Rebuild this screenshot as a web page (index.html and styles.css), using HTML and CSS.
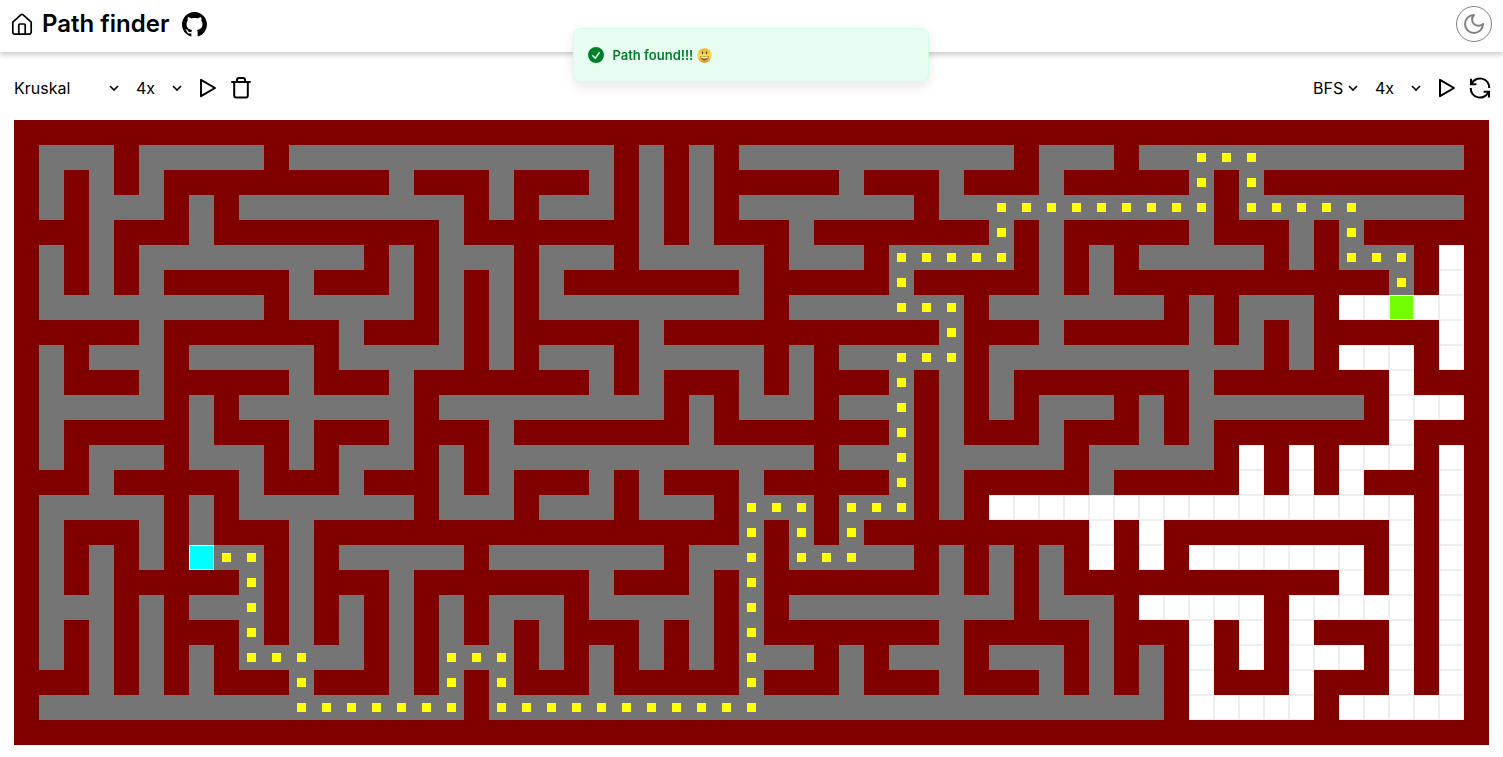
FILE: index.html
```html
<!DOCTYPE html>
<html lang="en">
<head>
<meta charset="utf-8">
<meta name="viewport" content="width=device-width, initial-scale=1">
<title>Path finder</title>
<link rel="stylesheet" href="styles.css">
</head>
<body>
<header class="header">
  <div class="brand">
    <a class="icon-link" href="#" aria-label="Home">
      <svg class="icon home" viewBox="0 0 24 24"><path d="M2.8 10.1 10.8 2.800a1.8 1.8 0 0 1 2.4 0l8 7.300V20a2.2 2.2 0 0 1-2.2 2.200H5A2.2 2.2 0 0 1 2.800 20zM8.800 22.200V13a1 1 0 0 1 1-1h4.400a1 1 0 0 1 1 1v9.200"/></svg>
    </a>
    <h1 class="title">Path finder</h1>
    <a class="icon-link github" href="#" aria-label="GitHub">
      <svg class="icon-github" viewBox="0 0 16 16"><path d="M8 0C3.58 0 0 3.58 0 8c0 3.54 2.29 6.53 5.47 7.59.4.07.55-.17.55-.38 0-.19-.01-.82-.01-1.49-2.01.37-2.53-.49-2.69-.94-.09-.23-.48-.94-.82-1.13-.28-.15-.68-.52-.01-.53.63-.01 1.08.58 1.23.82.72 1.21 1.87.87 2.33.66.07-.52.28-.87.51-1.07-1.78-.2-3.64-.89-3.64-3.95 0-.87.31-1.59.82-2.15-.08-.2-.36-1.02.08-2.12 0 0 .67-.21 2.2.82.64-.18 1.32-.27 2-.27s1.36.09 2 .27c1.53-1.04 2.2-.82 2.2-.82.44 1.1.16 1.92.08 2.12.51.56.82 1.27.82 2.15 0 3.07-1.87 3.75-3.65 3.95.29.25.54.73.54 1.48 0 1.07-.01 1.93-.01 2.2 0 .21.15.46.55.38A8.01 8.01 0 0 0 16 8c0-4.42-3.58-8-8-8z"/></svg>
    </a>
  </div>
  <button class="theme" type="button" aria-label="Toggle theme">
    <svg class="icon" viewBox="0 0 24 24"><path d="M12 3a6 6 0 0 0 9 9 9 9 0 1 1-9-9Z"/></svg>
  </button>
</header>

<main>
  <div class="toolbar">
    <div class="group">
      <div class="picker picker-wide">
        <select aria-label="Maze algorithm"><option>Kruskal</option></select>
        <svg class="chevron" viewBox="0 0 12 12"><path d="M2 4l4 4 4-4"/></svg>
      </div>
      <div class="picker">
        <select aria-label="Maze speed"><option>4x</option></select>
        <svg class="chevron" viewBox="0 0 12 12"><path d="M2 4l4 4 4-4"/></svg>
      </div>
      <div class="actions">
        <button class="icon-button" type="button" aria-label="Generate maze">
          <svg class="icon" viewBox="0 0 24 24"><path d="M6 3.8v16.4L20 12z"/></svg>
        </button>
        <button class="icon-button" type="button" aria-label="Clear">
          <svg class="icon" viewBox="0 0 24 24"><path d="M3 6h18M5.2 6v13.6a2 2 0 0 0 2 2h9.6a2 2 0 0 0 2-2V6M8 6V4a2 2 0 0 1 2-2h4a2 2 0 0 1 2 2v2"/></svg>
        </button>
      </div>
    </div>
    <div class="group">
      <div class="picker picker-narrow">
        <select aria-label="Search algorithm"><option>BFS</option></select>
        <svg class="chevron" viewBox="0 0 12 12"><path d="M2 4l4 4 4-4"/></svg>
      </div>
      <div class="picker">
        <select aria-label="Search speed"><option>4x</option></select>
        <svg class="chevron" viewBox="0 0 12 12"><path d="M2 4l4 4 4-4"/></svg>
      </div>
      <div class="actions">
        <button class="icon-button" type="button" aria-label="Find path">
          <svg class="icon" viewBox="0 0 24 24"><path d="M6 3.8v16.4L20 12z"/></svg>
        </button>
        <button class="icon-button" type="button" aria-label="Reset search">
          <svg class="icon sharp" viewBox="0 0 24 24"><path d="M3 2.8v5.4h5.4M3.4 8.2A9.3 9.3 0 0 1 21.3 12M21 21.4v-5.6h-5.4M20.6 15.8A9.3 9.3 0 0 1 2.7 12"/></svg>
        </button>
      </div>
    </div>
  </div>
  <div class="board" id="board" role="img" aria-label="Maze"></div>
</main>

<div class="toast" role="status">
  <svg class="toast-icon" viewBox="0 0 20 20"><path fill-rule="evenodd" d="M10 18a8 8 0 100-16 8 8 0 000 16zm3.857-9.809a.75.75 0 00-1.214-.882l-3.483 4.79-1.88-1.88a.75.75 0 10-1.06 1.061l2.5 2.5a.75.75 0 001.137-.089l4-5.5z"/></svg>
  <span>Path found!!!</span>
  <svg class="emoji" viewBox="0 0 30 30" role="img" aria-label="Smiling face">
    <defs><linearGradient id="face" x1="0" y1="0" x2="0" y2="1"><stop offset="0" stop-color="#eeb02f"/><stop offset=".55" stop-color="#fde35a"/><stop offset="1" stop-color="#dd8424"/></linearGradient></defs>
    <circle cx="15" cy="15" r="14.5" fill="url(#face)"/>
    <ellipse cx="11" cy="9.500" rx="1.5" ry="3.200" fill="#6b4516"/>
    <ellipse cx="19" cy="9.500" rx="1.5" ry="3.200" fill="#6b4516"/>
    <path d="M6.500 16c5 1.600 12 1.600 17 0 0 5-3.500 8.500-8.500 8.500s-8.500-3.500-8.500-8.500z" fill="#8a5a1c"/>
    <path d="M8 17c4.500 1.200 9.500 1.200 14 0l-.8 3c-4 1-8.400 1-12.400 0z" fill="#fff"/>
  </svg>
</div>
<script src="board.js"></script>
</body>
</html>
```
FILE: styles.css
```css
* {
  box-sizing: border-box;
}

body {
  margin: 0;
  background: #fff;
  color: #000;
  font-family: Inter, "Liberation Sans", sans-serif;
  font-size: 16px;
}

button,
select {
  margin: 0;
  padding: 0;
  border: 0;
  background: none;
  color: inherit;
  font: inherit;
}

.header {
  display: flex;
  align-items: center;
  justify-content: space-between;
  padding: 6px 11px 10px 10px;
  box-shadow: 0 3px 5px rgba(0, 0, 0, 0.2);
}

.brand {
  display: flex;
  align-items: center;
  gap: 8px;
}

.title {
  margin: 0;
  font-size: 24px;
  font-weight: 600;
  line-height: 32px;
}

.icon-link {
  display: flex;
  color: inherit;
}

.github {
  margin-left: 5px;
}

.icon {
  display: block;
  width: 24px;
  height: 24px;
  fill: none;
  stroke: currentColor;
  stroke-width: 2;
  stroke-linecap: round;
  stroke-linejoin: round;
}

.home {
  stroke-width: 1.7;
}

.sharp {
  stroke-linecap: butt;
  stroke-linejoin: miter;
}

.icon-github {
  width: 25px;
  height: 25px;
  fill: currentColor;
}

.theme {
  display: grid;
  place-items: center;
  width: 36px;
  height: 36px;
  border: 1px solid #808080;
  border-radius: 50%;
  color: #808080;
}

.toolbar {
  display: flex;
  justify-content: space-between;
  padding: 24px 11px 20px 14px;
}

.group {
  display: flex;
  align-items: center;
  gap: 16px;
}

.picker {
  position: relative;
  width: 47px;
}

.picker-wide {
  width: 106px;
}

.picker-narrow {
  width: 46px;
}

.picker select {
  display: block;
  width: 100%;
  height: 24px;
  appearance: none;
}

.chevron {
  position: absolute;
  top: 6px;
  right: 0;
  width: 12px;
  height: 12px;
  fill: none;
  stroke: currentColor;
  stroke-width: 1.6;
  pointer-events: none;
}

.actions {
  display: flex;
  gap: 10px;
  margin-left: -4px;
}

.board {
  display: grid;
  grid-template-columns: repeat(59, 25px);
  grid-auto-rows: 25px;
  justify-content: center;
}

.wall {
  background: #800000;
}

.visited {
  background: #757575;
}

.path {
  display: grid;
  place-items: center;
  background: #757575;
}

.path::before {
  content: "";
  width: 9px;
  height: 9px;
  background: #ff0;
}

.open {
  border: 1px solid #eee;
  background: #fff;
}

.start {
  border: 1px solid #eee;
  background: #0ff;
}

.end {
  border: 1px solid #eee;
  background: #73ff00;
}

.toast {
  position: fixed;
  top: 28px;
  left: 50%;
  display: flex;
  align-items: center;
  width: 356px;
  margin-left: -179px;
  padding: 16px 12px;
  border: 1px solid #d3fde5;
  border-radius: 8px;
  background: #e8fdf1;
  box-shadow: 0 4px 12px rgba(0, 0, 0, 0.1);
  color: #00802b;
  font-size: 13px;
  font-weight: 600;
  line-height: 20px;
}

.toast-icon {
  width: 20px;
  height: 20px;
  margin-right: 7px;
  fill: currentColor;
}

.emoji {
  width: 15px;
  height: 15px;
  margin-left: 4px;
}
```
FILE: board.js
```js
const COLUMNS = 59;
const START = [7, 17];
const END = [55, 7];

// Each row: visited column ranges, then the open (unvisited) ranges.
const ROWS = [
  ["", ""],
  ["1-3 5-9 11-23 25 27 29-39 41-43 45-57", ""],
  ["1 3 5 15 19 23 25 27 33 37 41 47 49", ""],
  ["1 3-5 7 9-17 19 21-23 25 27 29-35 37-47 49-57", ""],
  ["3 7 17 25 27 31 39 41 47 51 53", ""],
  ["1 3 5-13 15 17-19 21-23 25-29 31-33 35-39 41 43 45-49 51 53-55", "57"],
  ["1 3 5 11 15 17 19 21 29 35 41 43 55", "57"],
  ["1-9 11-15 17 19 21-29 31-37 39-45 47 49-51", "53-57"],
  ["5 13 17 19 25 37 41 47 49 51", "57"],
  ["1 3-5 7-11 13-17 19 21-23 25-29 31 33-37 39-49 51", "53-55 57"],
  ["1 5 11 15 23 25 29 31 35 37 39 47", "55"],
  ["1-5 7 9-15 17-25 27 29-31 33-35 37 39 41-43 45 47-53", "55-57"],
  ["1 7 11 15 19 27 35 37 41 45 47", "55"],
  ["1 3-5 7-9 11 13-15 17 19-31 33-35 37-41 43-47", "49 51 53-55 57"],
  ["3 9 13 17 19 23 25 29 35 37 43", "49 51 53 57"],
  ["1-5 7 9-15 17-19 21-23 25-27 29-31 33-35 37", "39-55 57"],
  ["1 5 7 11 29 31 33", "43 45 55 57"],
  ["1 3 5 8-9 11 13-17 19-25 27-29 31-35 37 39 41", "43 45 47-53 55 57"],
  ["1 3 9 11 15 23 27 29 37 39 41", "53 55 57"],
  ["1-3 5 7-9 11 13 15 17 19-21 23-27 29 31-39 41-43", "45-49 51-55 57"],
  ["1 3 5 9 11 13 15 17 19 21 25 27 29 37 43", "47 49 51 55 57"],
  ["1 3 5 7 9-13 15 17-19 21 23 25 27 29-31 33 35-37 39-41 43 45", "47 49 51-53 55 57"],
  ["3 5 7 11 15 17 19 23 29 33 37 41 43 45", "47 51 55 57"],
  ["1-17 19-45", "47-51 53-57"],
  ["", ""],
];

// Corners of the found path, as [column, row].
const CORNERS = [
  [8, 17], [9, 17], [9, 21], [11, 21], [11, 23], [17, 23], [17, 21], [19, 21],
  [19, 23], [29, 23], [29, 15], [31, 15], [31, 17], [33, 17], [33, 15],
  [35, 15], [35, 9], [37, 9], [37, 7], [35, 7], [35, 5], [39, 5], [39, 3],
  [47, 3], [47, 1], [49, 1], [49, 3], [53, 3], [53, 5], [55, 5], [55, 6],
];

function fill(cells, ranges, kind) {
  for (const range of ranges.split(" ").filter(Boolean)) {
    const [from, to = from] = range.split("-").map(Number);
    cells.fill(kind, from, to + 1);
  }
}

const grid = ROWS.map(([visited, open]) => {
  const cells = new Array(COLUMNS).fill("wall");
  fill(cells, visited, "visited");
  fill(cells, open, "open");
  return cells;
});

let [x, y] = CORNERS[0];
grid[y][x] = "path";
for (const [toX, toY] of CORNERS.slice(1)) {
  while (x !== toX || y !== toY) {
    x += Math.sign(toX - x);
    y += Math.sign(toY - y);
    grid[y][x] = "path";
  }
}
grid[START[1]][START[0]] = "start";
grid[END[1]][END[0]] = "end";

const board = document.getElementById("board");
for (const kind of grid.flat()) {
  const cell = document.createElement("div");
  cell.className = kind;
  board.append(cell);
}
```
